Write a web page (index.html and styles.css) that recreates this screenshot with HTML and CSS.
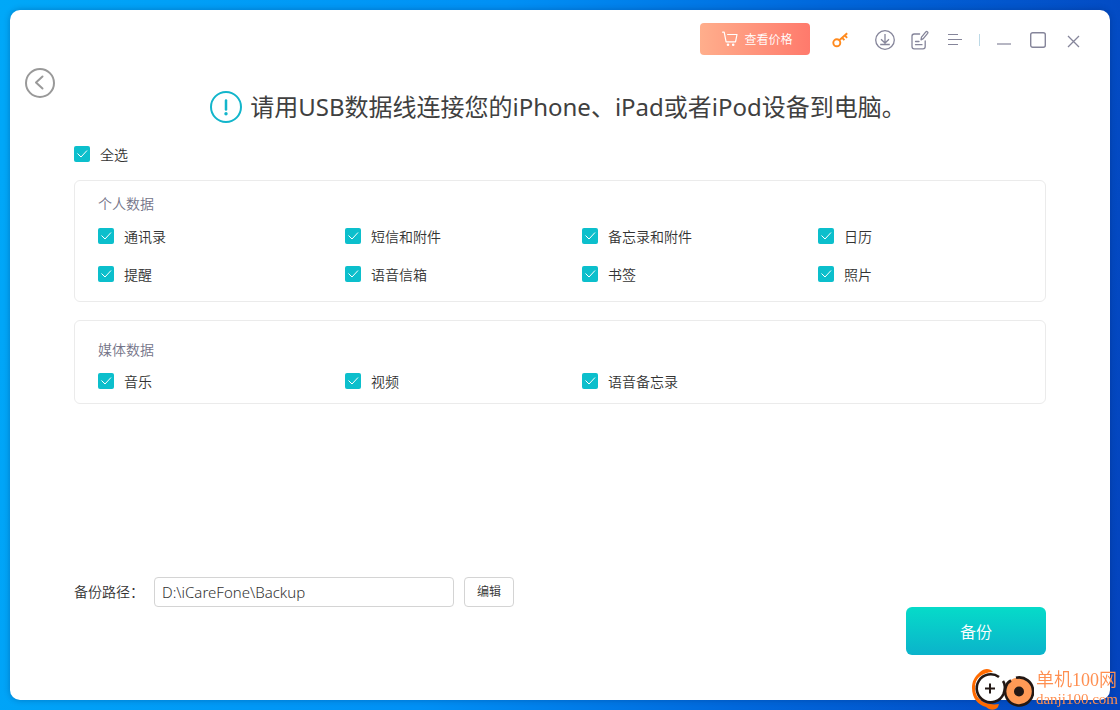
FILE: index.html
```html
<!DOCTYPE html>
<html lang="zh-CN">
<head>
<meta charset="utf-8">
<title>iCareFone</title>
<link rel="stylesheet" href="styles.css">
</head>
<body>
<main class="window">
  <header class="titlebar">
    <button class="price" type="button">
      <svg width="16" height="16" viewBox="0 0 16 16" fill="none" stroke="currentColor" stroke-width="1.2" stroke-linecap="round" stroke-linejoin="round"><path d="M.6 1.2h1.600l1.900 9.600h9.400l1.500-7.300H5.600"/><circle cx="6" cy="13.800" r=".7"/><circle cx="11.200" cy="13.800" r=".7"/></svg>
      <span>查看价格</span>
    </button>
    <div class="tools">
      <button class="icon key" type="button" aria-label="注册">
        <svg width="16" height="16" viewBox="0 0 16 16" fill="none" stroke="currentColor" stroke-width="1.9"><circle cx="4.800" cy="10.800" r="3.500"/><path d="M7.300 8.300L15.200 1.200M10.200 5.800l2.200 2.400M12.800 3.400l2.300 2.500"/></svg>
      </button>
      <button class="icon download" type="button" aria-label="下载">
        <svg width="20" height="20" viewBox="0 0 20 20" fill="none" stroke="currentColor" stroke-width="1.3"><circle cx="10" cy="10" r="9.300"/><path d="M10 4v9M6 9.200l4 3.800 4-3.800M5.200 14.500h9.600"/></svg>
      </button>
      <button class="icon edit" type="button" aria-label="反馈">
        <svg width="18" height="20" viewBox="0 0 18 20" fill="none" stroke="currentColor" stroke-width="1.3" stroke-linejoin="round" stroke-linecap="round"><path d="M8.600 4H3.200Q1 4 1 6.200v10.400Q1 18.800 3.200 18.800h8.800q2.200 0 2.200-2.200V11M4.500 11.500h3.500M4.500 14.700h6.500"/><path d="M10 9.800l.5-2.700 4.300-5.200q.8-.8 1.600-.1.900.7.200 1.600l-4.300 5.200z"/></svg>
      </button>
      <button class="icon menu" type="button" aria-label="菜单">
        <svg width="16" height="14" viewBox="0 0 16 14" fill="none" stroke="currentColor"><path d="M1 1.500h10M1 6.500h14M1 11.500h10" stroke-width="1.200"/></svg>
      </button>
      <span class="divider"></span>
      <button class="icon minimize" type="button" aria-label="最小化">
        <svg width="16" height="16" viewBox="0 0 16 16" stroke="currentColor"><path d="M1 12h14" stroke-width="1.200"/></svg>
      </button>
      <button class="icon maximize" type="button" aria-label="最大化">
        <svg width="16" height="16" viewBox="0 0 16 16" fill="none" stroke="currentColor" stroke-width="1.400"><rect x=".7" y=".7" width="14.600" height="14.600" rx="2"/></svg>
      </button>
      <button class="icon close" type="button" aria-label="关闭">
        <svg width="14" height="16" viewBox="0 0 14 16" fill="none" stroke="currentColor" stroke-width="1.300"><path d="M1 4l11 11M12 4l-11 11"/></svg>
      </button>
    </div>
  </header>

  <div class="hero">
    <button class="back" type="button" aria-label="返回">
      <svg width="30" height="30" viewBox="0 0 30 30" fill="none" stroke="currentColor" stroke-width="2"><circle cx="15" cy="15" r="14"/><path d="M17.500 8.500l-6.500 6 6.500 6" stroke-linecap="round" stroke-linejoin="round"/></svg>
    </button>
    <h1 class="title">
      <svg width="32" height="32" viewBox="0 0 32 32" fill="none" stroke="currentColor" stroke-width="2"><circle cx="16" cy="16" r="15"/><path d="M16 9.500v9" stroke-width="2.500" stroke-linecap="round"/><circle cx="16" cy="22.800" r="1.700" fill="currentColor" stroke="none"/></svg>
      <span>请用USB数据线连接您的iPhone、iPad或者iPod设备到电脑。</span>
    </h1>
  </div>

  <section class="content">
    <label class="check"><input type="checkbox" checked><span>全选</span></label>

    <fieldset class="panel personal" aria-labelledby="personal">
      <h2 class="heading" id="personal">个人数据</h2>
      <div class="options">
        <label class="check"><input type="checkbox" checked><span>通讯录</span></label>
        <label class="check"><input type="checkbox" checked><span>短信和附件</span></label>
        <label class="check"><input type="checkbox" checked><span>备忘录和附件</span></label>
        <label class="check"><input type="checkbox" checked><span>日历</span></label>
        <label class="check"><input type="checkbox" checked><span>提醒</span></label>
        <label class="check"><input type="checkbox" checked><span>语音信箱</span></label>
        <label class="check"><input type="checkbox" checked><span>书签</span></label>
        <label class="check"><input type="checkbox" checked><span>照片</span></label>
      </div>
    </fieldset>

    <fieldset class="panel media" aria-labelledby="media">
      <h2 class="heading" id="media">媒体数据</h2>
      <div class="options">
        <label class="check"><input type="checkbox" checked><span>音乐</span></label>
        <label class="check"><input type="checkbox" checked><span>视频</span></label>
        <label class="check"><input type="checkbox" checked><span>语音备忘录</span></label>
      </div>
    </fieldset>
  </section>

  <footer class="footer">
    <div class="path">
      <label class="path-label" for="path">备份路径：</label>
      <input class="path-input" id="path" type="text" value="D:\iCareFone\Backup">
      <button class="path-edit" type="button">编辑</button>
    </div>
    <button class="backup" type="button">备份</button>
  </footer>
</main>

<aside class="watermark">
  <svg width="62" height="42" viewBox="0 0 62 42" fill="none">
    <path d="M21 4C18 0 12 0 8 4 2 9 0 14 0 20c0 10 6 17 14 19 3 3 9 4 12 0l1-3C14 38 3 32 3 20 3 11 8 5 21 4z" fill="#ff6a00"/>
    <circle cx="18" cy="20.500" r="14" fill="#fff"/>
    <path d="M27 9A14 14 0 1 0 31.500 26Q34.500 18 31 13" stroke="#231815" stroke-width="2.600"/>
    <path d="M18 15.500v10M13 20.500h10" stroke="#231815" stroke-width="2"/>
    <circle cx="47" cy="23.500" r="14" fill="#ff9a56"/>
    <path d="M44 9.800A14 14 0 1 1 34 18.500Q35 14.500 39 12.500" stroke="#231815" stroke-width="2.600"/>
    <circle cx="47" cy="23.500" r="5" fill="#231815"/>
  </svg>
  <div class="brand"><span class="brand-name">单机100网</span><span class="brand-url">danji100.com</span></div>
</aside>
</body>
</html>
```

FILE: styles.css
```css
* { box-sizing: border-box; }

body {
  margin: 0;
  min-height: 100vh;
  padding: 10px;
  display: flex;
  font: 350 14px/20px "Noto Sans", "Noto Sans CJK SC", sans-serif;
  color: #333;
  background: linear-gradient(97deg, #00a8f8 0%, #0090f5 42%, #0068dc 68%, #0443bd 100%);
}

button, input { font: inherit; color: inherit; }
button { padding: 0; border: 0; background: none; cursor: pointer; }
svg { display: block; flex: none; }
h1, h2 { margin: 0; font-weight: inherit; }

.window {
  flex: 1;
  display: flex;
  flex-direction: column;
  border-radius: 10px;
  background: #fff;
  box-shadow: 0 0 6px rgba(0, 30, 80, .3);
}

.titlebar {
  display: flex;
  justify-content: flex-end;
  align-items: center;
  gap: 22px;
  padding: 13px 29px 0 0;
}

.price {
  width: 110px;
  height: 32px;
  display: flex;
  align-items: center;
  justify-content: center;
  gap: 6px;
  padding-left: 5px;
  border-radius: 4px;
  color: #fff;
  font-size: 12px;
  background: linear-gradient(90deg, #ffae8c, #ff7a6c);
}
.price span { padding-top: 2px; }

.tools { display: flex; align-items: center; padding-top: 2px; color: #85859a; }
.icon { color: inherit; }
.key { color: #ff8a1e; }
.download { margin-left: 27px; }
.edit { margin-left: 16px; }
.menu { margin-left: 18px; }
.divider { width: 1px; height: 12px; margin-left: 16px; background: #bcd9e6; }
.minimize { margin-left: 16px; }
.maximize { margin-left: 18px; }
.close { margin-left: 21px; }

.hero {
  display: grid;
  grid-template-columns: 30px 1fr 30px;
  padding: 13px 15px 0;
}
.back { align-self: start; color: #999; }
.title {
  display: flex;
  align-items: center;
  justify-content: center;
  gap: 8px;
  padding: 23px 4px 0 0;
  font-size: 24px;
  font-weight: 400;
  line-height: 32px;
  color: #404040;
}
.title svg { color: #12b5cb; }

.content { padding: 20px 64px 0; }

.check { display: flex; align-items: center; gap: 10px; }
.check input {
  appearance: none;
  flex: none;
  width: 16px;
  height: 16px;
  margin: 0;
  border-radius: 2px;
  background: #e4e4e4;
}
.check input:checked {
  background: #0cbfcc url("data:image/svg+xml,%3Csvg xmlns='http://www.w3.org/2000/svg' viewBox='0 0 16 16' fill='none' stroke='white'%3E%3Cpath d='M3.500 7.500l3.500 3.500 6-6.500'/%3E%3C/svg%3E");
}
.check span { padding-top: 2px; }

.panel {
  min-width: 0;
  margin: 0;
  border: 1px solid #ebebeb;
  border-radius: 6px;
}
.personal { margin-top: 15px; padding: 13px 0 16px 23px; }
.media { margin-top: 18px; padding: 19px 0 11px 23px; }
.heading { font-size: 14px; line-height: 20px; color: #747488; }
.options {
  display: grid;
  grid-template-columns: 247fr 237fr 236fr 227fr;
  gap: 16px 0;
  padding-top: 11px;
}
.media .options { padding-top: 10px; }

.footer {
  display: flex;
  justify-content: space-between;
  align-items: flex-end;
  margin-top: auto;
  padding: 40px 64px 45px;
}
.path { display: flex; align-items: center; align-self: flex-start; padding-bottom: 48px; }
.path-label { width: 80px; }
.path-input {
  width: 300px;
  height: 30px;
  padding: 0 7px;
  border: 1px solid #d4d4d4;
  border-radius: 4px;
  font-size: 15px;
  background: #fff;
}
.path-edit {
  width: 50px;
  height: 30px;
  margin-left: 10px;
  border: 1px solid #d4d4d4;
  border-radius: 4px;
  font-size: 12px;
}
.backup {
  width: 140px;
  height: 48px;
  padding-top: 2px;
  border-radius: 6px;
  color: #fff;
  font-size: 16px;
  background: linear-gradient(#06dbc9, #0bb3cb);
}

.watermark {
  position: fixed;
  right: 2px;
  bottom: 0;
  display: flex;
  gap: 2px;
  color: #ff8f50;
}
.brand { display: flex; flex-direction: column; }
.brand-name { font: 350 18px/24px "Liberation Serif", "Noto Sans CJK SC", serif; }
.brand-url { font: 15px/15px "Liberation Serif", serif; }
```
